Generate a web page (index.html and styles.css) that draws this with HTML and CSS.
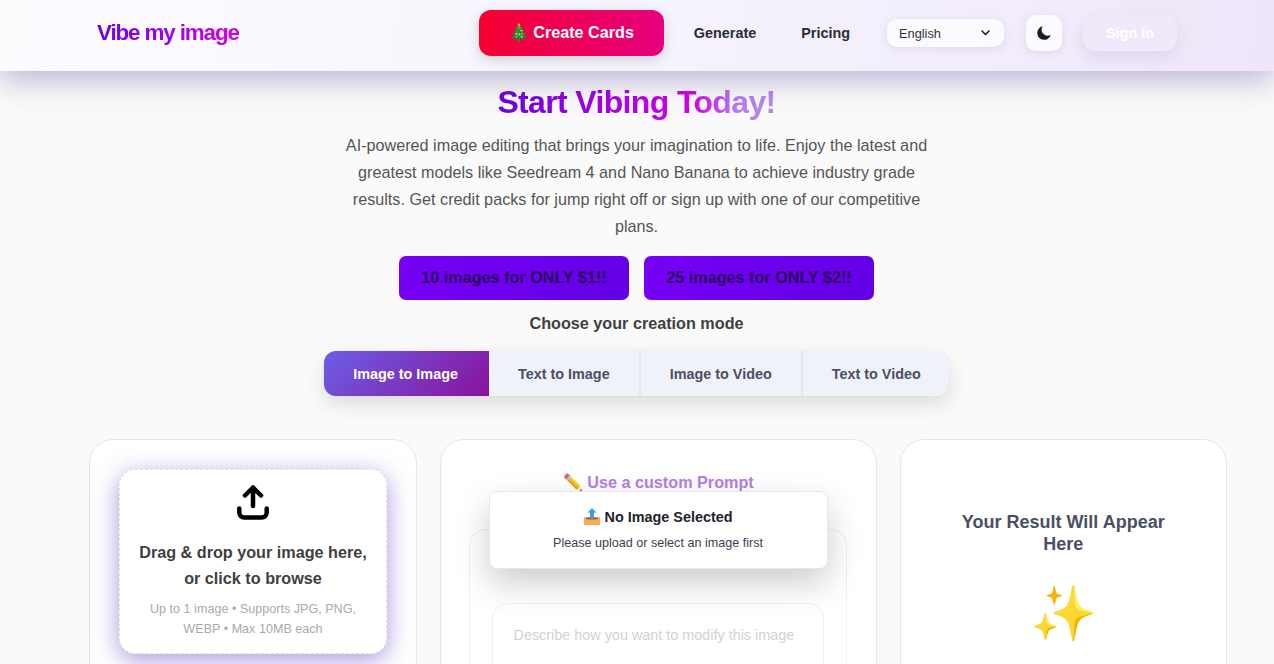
FILE: index.html
```html
<!DOCTYPE html>
<html lang="en">
<head>
    <meta charset="UTF-8">
    <meta name="viewport" content="width=device-width, initial-scale=1.0">
    <title>Vibe my image</title>
    <link rel="stylesheet" href="styles.css">
</head>
<body>
    <header class="site-header">
        <a class="logo">Vibe my image</a>
        <nav class="nav">
            <button class="cards-button">🎄 Create Cards</button>
            <div class="nav-links">
                <a class="nav-link">Generate</a>
                <a class="nav-link">Pricing</a>
            </div>
            <div class="lang-select">
                <span>English</span>
                <svg width="9" height="6" viewBox="0 0 9 6"><path d="M1 1l3.500 3.500L8 1" fill="none" stroke="#222" stroke-width="1.6" stroke-linecap="round" stroke-linejoin="round"/></svg>
            </div>
            <button class="theme-button">
                <svg width="14" height="14" viewBox="0 0 14 14"><path d="M5.800.2a6.900 6.900 0 1 0 8 8.600A6 6 0 0 1 5.800.2z" fill="#1c1c28"/></svg>
            </button>
            <button class="signin-button">Sign In</button>
        </nav>
    </header>

    <main class="page">
        <section class="hero">
            <h1 class="hero-title">Start Vibing Today!</h1>
            <p class="hero-text">AI-powered image editing that brings your imagination to life. Enjoy the latest and greatest models like Seedream 4 and Nano Banana to achieve industry grade results. Get credit packs for jump right off or sign up with one of our competitive plans.</p>
            <div class="offers">
                <button class="offer-button">10 images for ONLY $1!!</button>
                <button class="offer-button">25 images for ONLY $2!!</button>
            </div>
            <h2 class="mode-label">Choose your creation mode</h2>
            <div class="mode-tabs">
                <button class="mode-tab active">Image to Image</button>
                <button class="mode-tab">Text to Image</button>
                <button class="mode-tab">Image to Video</button>
                <button class="mode-tab">Text to Video</button>
            </div>
        </section>

        <section class="workspace">
            <div class="card">
                <div class="dropzone">
                    <svg class="upload-icon" width="32" height="36" viewBox="0 0 32 36"><path d="M16 22V3.500M8 11.500L16 3.500l8 8M2.300 24.500v4a5 5 0 0 0 5 5h17.400a5 5 0 0 0 5-5v-4" fill="none" stroke="#000" stroke-width="4.500" stroke-linecap="round" stroke-linejoin="round"/></svg>
                    <p class="drop-title">Drag &amp; drop your image here, or click to browse</p>
                    <p class="drop-note">Up to 1 image • Supports JPG, PNG, WEBP • Max 10MB each</p>
                </div>
            </div>

            <div class="card prompt-card">
                <h3 class="prompt-title">✏️ Use a custom Prompt</h3>
                <div class="prompt-panel">
                    <div class="prompt-input">Describe how you want to modify this image</div>
                </div>
                <div class="notice">
                    <strong class="notice-title">
                        <svg class="tray-icon" width="16" height="17" viewBox="0 0 16 17">
                            <path d="M8 0l4.500 4.500H10V10H6V4.500H3.500z" fill="#3f9be4"/>
                            <rect x="0" y="9" width="16" height="8" rx="1" fill="#f6ad55"/>
                            <rect x="2.500" y="9.500" width="11" height="2" fill="#8d6a3c"/>
                            <path d="M6 9h4v1.500H6z" fill="#3f9be4"/>
                        </svg>
                        No Image Selected
                    </strong>
                    <span class="notice-text">Please upload or select an image first</span>
                </div>
            </div>

            <div class="card result-card">
                <h3 class="result-title">Your Result Will Appear Here</h3>
                <div class="result-icon">✨</div>
            </div>
        </section>
    </main>
</body>
</html>
```

FILE: styles.css
```css
* {
    box-sizing: border-box;
}
html, body {
    height: 664px;
    overflow: hidden;
}
body {
    margin: 0;
    background: #fafafa;
    font-family: "Liberation Sans", Arial, sans-serif;
    color: #444;
}
button {
    font-family: inherit;
    border: none;
}
.site-header {
    position: relative;
    z-index: 2;
    height: 71px;
    display: flex;
    justify-content: space-between;
    align-items: center;
    padding: 0 97px 5px;
    background: linear-gradient(100deg, #fcfcff 0%, #f6f4fd 50%, #efe6f9 100%);
    box-shadow: 0 8px 32px rgba(60, 40, 140, 0.35);
}
.logo {
    font-size: 22.4px;
    font-weight: bold;
    letter-spacing: -1.12px;
    background: linear-gradient(90deg, #6a00f0, #d400e8);
    -webkit-background-clip: text;
    background-clip: text;
    color: transparent;
}
.nav {
    display: flex;
    align-items: center;
}
.cards-button {
    width: 185px;
    height: 46px;
    padding-bottom: 2px;
    border-radius: 12px;
    background: linear-gradient(90deg, #f5002f, #e6007f);
    color: #fff;
    font-size: 16.2px;
    font-weight: bold;
    box-shadow: 0 4px 14px rgba(0, 0, 0, 0.15);
}
.nav-links {
    display: flex;
    gap: 45px;
    padding: 0 37px 0 30px;
}
.nav-link {
    font-size: 14.4px;
    font-weight: bold;
    color: #2c2c34;
}
.lang-select {
    width: 117px;
    height: 28px;
    display: flex;
    justify-content: space-between;
    align-items: center;
    padding: 0 14px 0 12px;
    border-radius: 10px;
    background: #fbfaff;
    font-size: 12.8px;
    color: #333;
    box-shadow: 0 2px 8px rgba(60, 40, 140, 0.1);
}
.theme-button {
    width: 36px;
    height: 36px;
    display: flex;
    justify-content: center;
    align-items: center;
    margin: 0 21px 0 22px;
    padding: 0;
    border-radius: 10px;
    background: #fbfaff;
    box-shadow: 0 2px 8px rgba(60, 40, 140, 0.1);
}
.signin-button {
    width: 94px;
    height: 36px;
    border-radius: 12px;
    background: #efe9fa;
    color: #fff;
    font-size: 14.4px;
    font-weight: bold;
    box-shadow: 0 6px 16px rgba(60, 40, 140, 0.1);
}
.hero {
    display: flex;
    flex-direction: column;
    align-items: center;
    padding: 11px 1px 0 0;
}
.hero-title {
    margin: 0;
    font-size: 32px;
    line-height: 40px;
    letter-spacing: -0.64px;
    background: linear-gradient(90deg, #6a00e0 0%, #d400e8 70%, #b678f0 85%, #b48cf0 100%);
    -webkit-background-clip: text;
    background-clip: text;
    color: transparent;
}
.hero-text {
    width: 600px;
    margin: 10px 0 0;
    font-size: 16.2px;
    line-height: 27px;
    text-align: center;
    color: #555;
}
.offers {
    display: flex;
    gap: 15px;
    margin-top: 16px;
}
.offer-button {
    width: 230px;
    height: 44px;
    padding-bottom: 2px;
    border-radius: 7px;
    background: linear-gradient(100deg, #7700f5, #6200e6);
    color: #2a0a5e;
    font-size: 16.2px;
    font-weight: bold;
}
.mode-label {
    margin: 14px 0 0;
    font-size: 16.2px;
    line-height: 18px;
    color: #3f3f3f;
}
.mode-tabs {
    display: flex;
    margin-top: 19px;
    border-radius: 12px;
    background: #eef1f8;
    box-shadow: 0 0 1px #cfd4e2, 0 8px 20px rgba(0, 0, 0, 0.12);
    overflow: hidden;
}
.mode-tab {
    height: 45px;
    padding: 0 29px;
    background: #eff2f9;
    border-right: 2px solid #e3e7f0;
    font-size: 14.4px;
    font-weight: bold;
    color: #4a4f65;
}
.mode-tab:last-child {
    padding-right: 28px;
    border-right: none;
}
.mode-tab.active {
    padding: 0 31px 0 29px;
    border-right: none;
    background: linear-gradient(135deg, #6a5fe6, #8a129c);
    color: #fff;
}
.workspace {
    display: grid;
    grid-template-columns: 328px 437.5px 327.5px;
    gap: 22.5px;
    margin: 43px 0 0 89px;
}
.card {
    height: 600px;
    padding: 29px;
    border: 1px solid #e6e6e8;
    border-radius: 24px;
    background: #fff;
}
.dropzone {
    height: 185px;
    display: flex;
    flex-direction: column;
    align-items: center;
    padding: 14px 16px 0;
    border: 1px dashed #e4def2;
    border-radius: 16px;
    background: #fff;
    text-align: center;
    box-shadow: 0 6px 24px rgba(90, 50, 190, 0.5);
}
.upload-icon {
    flex: none;
}
.drop-title {
    margin: 19px 0 0;
    font-size: 16.2px;
    font-weight: bold;
    line-height: 26px;
    color: #3f3f3f;
}
.drop-note {
    margin: 8px 0 0;
    font-size: 12.6px;
    line-height: 20px;
    color: #aaa;
}
.prompt-card {
    position: relative;
    text-align: center;
}
.prompt-title {
    margin: 1px 0 0;
    font-size: 16.2px;
    line-height: 24px;
    color: #b57ee8;
}
.prompt-panel {
    height: 300px;
    margin: 35px 0 0 -1px;
    padding: 73px 22px 0;
    border: 1px solid #f0f0f2;
    border-radius: 16px;
}
.prompt-input {
    height: 120px;
    padding: 23px 21px 0;
    border: 1px solid #efeff2;
    border-radius: 16px;
    font-size: 14.4px;
    text-align: left;
    color: #d2d2d4;
}
.notice {
    position: absolute;
    top: 51px;
    left: 48px;
    width: 339px;
    height: 78px;
    display: flex;
    flex-direction: column;
    align-items: center;
    padding-top: 15px;
    border: 1px solid #e8e6f6;
    border-radius: 8px;
    background: #fff;
    box-shadow: 0 14px 34px rgba(0, 0, 0, 0.2);
}
.notice-title {
    font-size: 14.4px;
    line-height: 20px;
    color: #22222c;
}
.tray-icon {
    vertical-align: -3px;
    margin-right: 1px;
}
.notice-text {
    margin-top: 7px;
    font-size: 12.6px;
    line-height: 18px;
    color: #3c3f50;
}
.result-card {
    display: flex;
    flex-direction: column;
    align-items: center;
    padding-top: 71px;
    text-align: center;
}
.result-title {
    width: 240px;
    margin: 0;
    font-size: 18px;
    line-height: 22px;
    color: #4a4f68;
}
.result-icon {
    margin-top: 23px;
    font-size: 54px;
    line-height: 70px;
}
```
